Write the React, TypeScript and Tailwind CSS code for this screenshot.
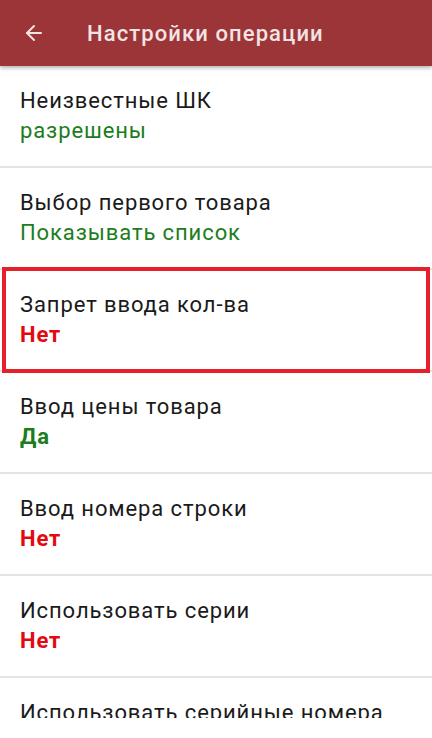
import { ArrowLeft } from 'lucide-react';

type Setting = {
  label: string;
  value: string;
  tone: 'green' | 'red';
  bold?: boolean;
  highlighted?: boolean;
};

const settings: Setting[] = [
  { label: 'Неизвестные ШК', value: 'разрешены', tone: 'green' },
  { label: 'Выбор первого товара', value: 'Показывать список', tone: 'green' },
  { label: 'Запрет ввода кол-ва', value: 'Нет', tone: 'red', bold: true, highlighted: true },
  { label: 'Ввод цены товара', value: 'Да', tone: 'green', bold: true },
  { label: 'Ввод номера строки', value: 'Нет', tone: 'red', bold: true },
  { label: 'Использовать серии', value: 'Нет', tone: 'red', bold: true },
  { label: 'Использовать серийные номера', value: 'Нет', tone: 'red', bold: true }
];

function SettingRow({ item }: { item: Setting }) {
  const valueColor = item.tone === 'green' ? 'text-[#1b7d1b]' : 'text-[#e4080f]';
  return (
    <div className="relative border-b-2 border-[#e4e4e4]">
      <div className="flex h-[100px] flex-col justify-center px-5 text-[22px] leading-[30px] tracking-[0.9px]">
        <p className="text-[#1a1a1a]">{item.label}</p>
        <p className={`${valueColor} ${item.bold ? 'font-bold' : ''}`}>{item.value}</p>
      </div>
      {item.highlighted && (
        <div className="pointer-events-none absolute top-[-3px] right-[2px] bottom-[-3px] left-[2px] border-4 border-[#e5202b]" />
      )}
    </div>
  );
}

export default function App() {
  return (
    <div className="h-[738px] w-[432px] overflow-hidden bg-white font-['Roboto',sans-serif]">
      <header className="relative z-10 flex h-[66px] items-center bg-[#9b3538] shadow-[0_2px_4px_rgba(0,0,0,0.3)]">
        <ArrowLeft size={24} strokeWidth={2} className="ml-[22px] text-[#f3e4e4]" />
        <h1 className="ml-[41px] text-[22px] font-medium tracking-[1.1px] text-[#f3e4e4]">
          Настройки операции
        </h1>
      </header>
      <main className="h-[652px] overflow-hidden">
        {settings.map((item) => (
          <SettingRow key={item.label} item={item} />
        ))}
      </main>
    </div>
  );
}
